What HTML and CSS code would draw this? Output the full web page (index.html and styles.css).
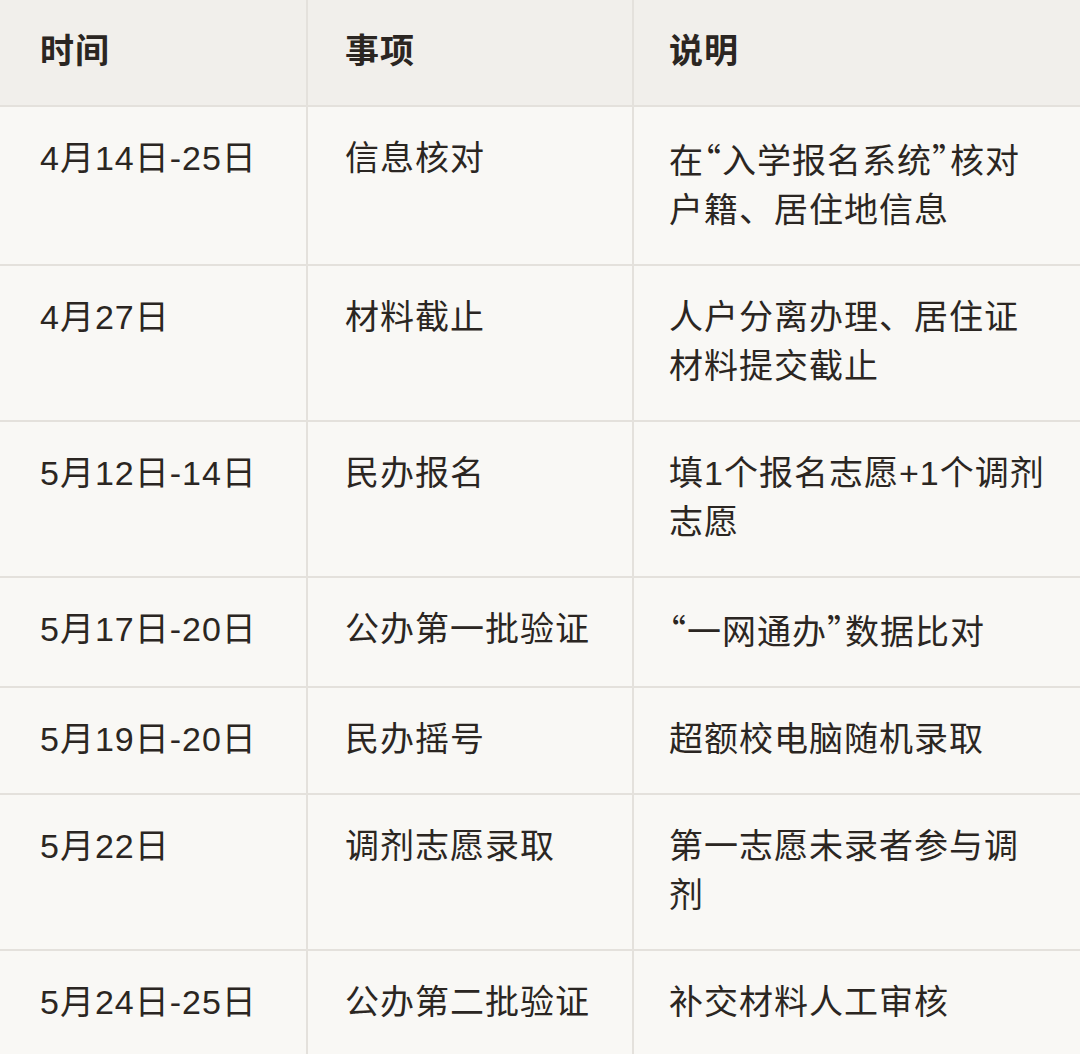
FILE: index.html
```html
<!DOCTYPE html>
<html lang="zh-CN">
<head>
<meta charset="utf-8">
<title>入学时间表</title>
<link rel="stylesheet" href="styles.css">
</head>
<body>
<table class="schedule">
  <colgroup>
    <col class="c-time">
    <col class="c-item">
    <col class="c-note">
  </colgroup>
  <thead>
    <tr><th>时间</th><th>事项</th><th>说明</th></tr>
  </thead>
  <tbody>
    <tr><td>4月14日-25日</td><td>信息核对</td><td>在<span class="q">“</span>入学报名系统<span class="q">”</span>核对户籍、居住地信息</td></tr>
    <tr><td>4月27日</td><td>材料截止</td><td>人户分离办理、居住证材料提交截止</td></tr>
    <tr><td>5月12日-14日</td><td>民办报名</td><td>填1个报名志愿+1个调剂志愿</td></tr>
    <tr><td>5月17日-20日</td><td>公办第一批验证</td><td><span class="q">“</span>一网通办<span class="q">”</span>数据比对</td></tr>
    <tr><td>5月19日-20日</td><td>民办摇号</td><td>超额校电脑随机录取</td></tr>
    <tr><td>5月22日</td><td>调剂志愿录取</td><td>第一志愿未录者参与调剂</td></tr>
    <tr><td>5月24日-25日</td><td>公办第二批验证</td><td>补交材料人工审核</td></tr>
  </tbody>
</table>
</body>
</html>
```

FILE: styles.css
```css
html, body {
  margin: 0;
  padding: 0;
  background: #f9f8f5;
  overflow: hidden;
}

.schedule {
  width: 1080px;
  border-collapse: collapse;
  table-layout: fixed;
  font-family: "Liberation Sans", "Noto Sans CJK SC", sans-serif;
  font-size: 34px;
  letter-spacing: 1px;
  line-height: 49px;
  color: #2b2622;
}

.c-time { width: 307px; }
.c-item { width: 326px; }
.c-note { width: 447px; }

.schedule th,
.schedule td {
  text-align: left;
  vertical-align: top;
  padding: 27px 30px 29px 37px;
  border: 2px solid #e4e1dc;
}

.schedule tr > :first-child { border-left: none; padding-left: 40px; }
.schedule tr > :last-child { border-right: none; padding-left: 35px; padding-right: 30px; }
.schedule thead th { border-top: none; }

.schedule th {
  background: #f1efeb;
  font-weight: 600;
}

.schedule td {
  background: #f9f8f5;
  font-weight: 400;
}

.q {
  font-family: "Noto Sans CJK SC", sans-serif;
  font-feature-settings: "halt";
}
```
